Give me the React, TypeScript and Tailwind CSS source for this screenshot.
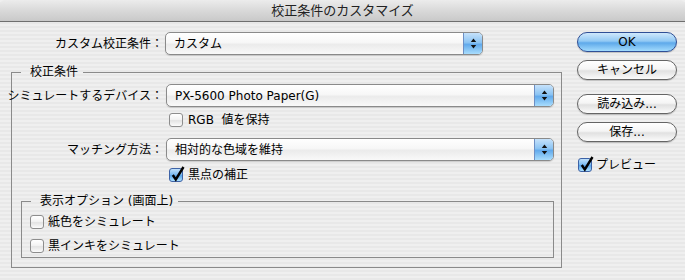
import type { ReactNode } from "react";

function Arrows() {
  return (
    <svg width="7" height="13" viewBox="0 0 7 13">
      <path d="M3.5 1.5 L6.2 5 H0.8 Z" fill="#111" />
      <path d="M3.5 11.5 L6.2 8 H0.8 Z" fill="#111" />
    </svg>
  );
}

function Popup({ value, className = "" }: { value: string; className?: string }) {
  return (
    <div
      className={`flex h-[23px] items-stretch rounded-[5px] border border-[#8a8a8a] bg-[linear-gradient(#ffffff,#f7f7f7_45%,#ebebeb_55%,#f9f9f9)] shadow-[0_1px_1px_rgba(0,0,0,0.15)] ${className}`}
    >
      <div className="flex flex-1 items-center pl-[8px] text-[12px] leading-[16px] whitespace-nowrap">{value}</div>
      <div className="flex w-[19px] items-center justify-center rounded-r-[4px] border-l border-[#6d8fc4] bg-[linear-gradient(#c6e2fb,#8cc4f3_45%,#62aaec_55%,#a9ddfd)]">
        <Arrows />
      </div>
    </div>
  );
}

function Check({ checked = false }: { checked?: boolean }) {
  return (
    <span
      className={`relative inline-block h-[14px] w-[14px] shrink-0 rounded-[3px] border ${
        checked
          ? "border-[#3d62a6] bg-[linear-gradient(#c0e0fb,#7fbdf1_45%,#5aa6ea_55%,#ace0fe)]"
          : "border-[#8d8d8d] bg-[linear-gradient(#ffffff,#f3f3f3_45%,#e3e3e3_55%,#fbfbfb)]"
      }`}
    >
      {checked && (
        <svg className="absolute left-[1px] top-[-3px]" width="14" height="16" viewBox="0 0 14 16">
          <path d="M1.8 9 L4.8 13.5 L12.5 1" stroke="#000" strokeWidth="2.4" fill="none" />
        </svg>
      )}
    </span>
  );
}

function Btn({ children, primary = false }: { children: ReactNode; primary?: boolean }) {
  return (
    <div
      className={`flex h-[20px] w-[100px] items-center justify-center rounded-full border text-[12px] leading-[16px] shadow-[0_1px_1px_rgba(0,0,0,0.2)] ${
        primary
          ? "border-[#2f4f96] bg-[linear-gradient(#cfe8fc,#92c9f4_45%,#5ea9ea_55%,#a2dbfd)]"
          : "border-[#656565] bg-[linear-gradient(#ffffff,#f5f5f5_45%,#e1e1e1_55%,#fbfbfb)]"
      }`}
    >
      {children}
    </div>
  );
}

function Label({ children, w }: { children: ReactNode; w: string }) {
  return <div className={`flex shrink-0 justify-end whitespace-nowrap text-[12px] leading-[16px] ${w}`}>{children}</div>;
}

export default function App() {
  return (
    <div className="h-[280px] w-[685px] overflow-hidden bg-[repeating-linear-gradient(180deg,#efefef_0px,#efefef_2px,#e8e8e8_2px,#e8e8e8_4px)] font-[family-name:'DejaVu_Sans','Noto_Sans_CJK_JP',sans-serif] text-black">
      {/* Title bar */}
      <div className="flex h-[22px] items-center justify-center rounded-t-[5px] border-b border-[#6f6f6f] bg-[linear-gradient(#ececec,#d9d9d9_50%,#c9c9c9)] text-[13px] leading-[16px] text-[#222]">
        校正条件のカスタマイズ
      </div>

      <div className="flex pt-[10px]">
        {/* Left column */}
        <div className="w-[562px] shrink-0">
          <div className="flex items-center">
            <Label w="w-[163px]">カスタム校正条件：</Label>
            <Popup value="カスタム" className="ml-[2px] w-[318px]" />
          </div>

          <fieldset className="mt-[9px] ml-[11px] w-[551px] border border-[#8a8a8a] pb-[9px]">
            <legend className="ml-[9px] pl-[9px] pr-[5px] text-[12px] leading-[16px]">校正条件</legend>

            <div className="mt-[4px] flex items-center">
              <Label w="w-[151px]">シミュレートするデバイス：</Label>
              <Popup value="PX-5600 Photo Paper(G)" className="ml-[3px] mr-[7px] flex-1" />
            </div>

            <div className="mt-[5px] flex h-[16px] items-center gap-[5px] pl-[157px] text-[12px] leading-[16px]">
              <Check />
              <span>RGB&nbsp;&nbsp;値を保持</span>
            </div>

            <div className="mt-[10px] flex items-center">
              <Label w="w-[151px]">マッチング方法：</Label>
              <Popup value="相対的な色域を維持" className="ml-[3px] mr-[7px] flex-1" />
            </div>

            <div className="mt-[6px] flex h-[16px] items-center gap-[5px] pl-[157px] text-[12px] leading-[16px]">
              <Check checked />
              <span>黒点の補正</span>
            </div>

            <fieldset className="mt-[10px] ml-[9px] mr-[7px] border border-[#8a8a8a] pb-[3px]">
              <legend className="ml-[9px] pl-[9px] pr-[5px] text-[12px] leading-[16px]">表示オプション (画面上)</legend>
              <div className="mt-[5px] flex h-[16px] items-center gap-[4px] pl-[8px] text-[12px] leading-[16px]">
                <Check />
                <span>紙色をシミュレート</span>
              </div>
              <div className="mt-[8px] flex h-[16px] items-center gap-[4px] pl-[8px] text-[12px] leading-[16px]">
                <Check />
                <span>黒インキをシミュレート</span>
              </div>
            </fieldset>
          </fieldset>
        </div>

        {/* Right column */}
        <div className="flex flex-col pl-[15px]">
          <Btn primary>OK</Btn>
          <div className="mt-[8px]">
            <Btn>キャンセル</Btn>
          </div>
          <div className="mt-[14px]">
            <Btn>読み込み...</Btn>
          </div>
          <div className="mt-[8px]">
            <Btn>保存...</Btn>
          </div>
          <div className="mt-[15px] flex h-[16px] items-center gap-[4px] pl-[1px] text-[12px] leading-[16px]">
            <Check checked />
            <span>プレビュー</span>
          </div>
        </div>
      </div>
    </div>
  );
}
